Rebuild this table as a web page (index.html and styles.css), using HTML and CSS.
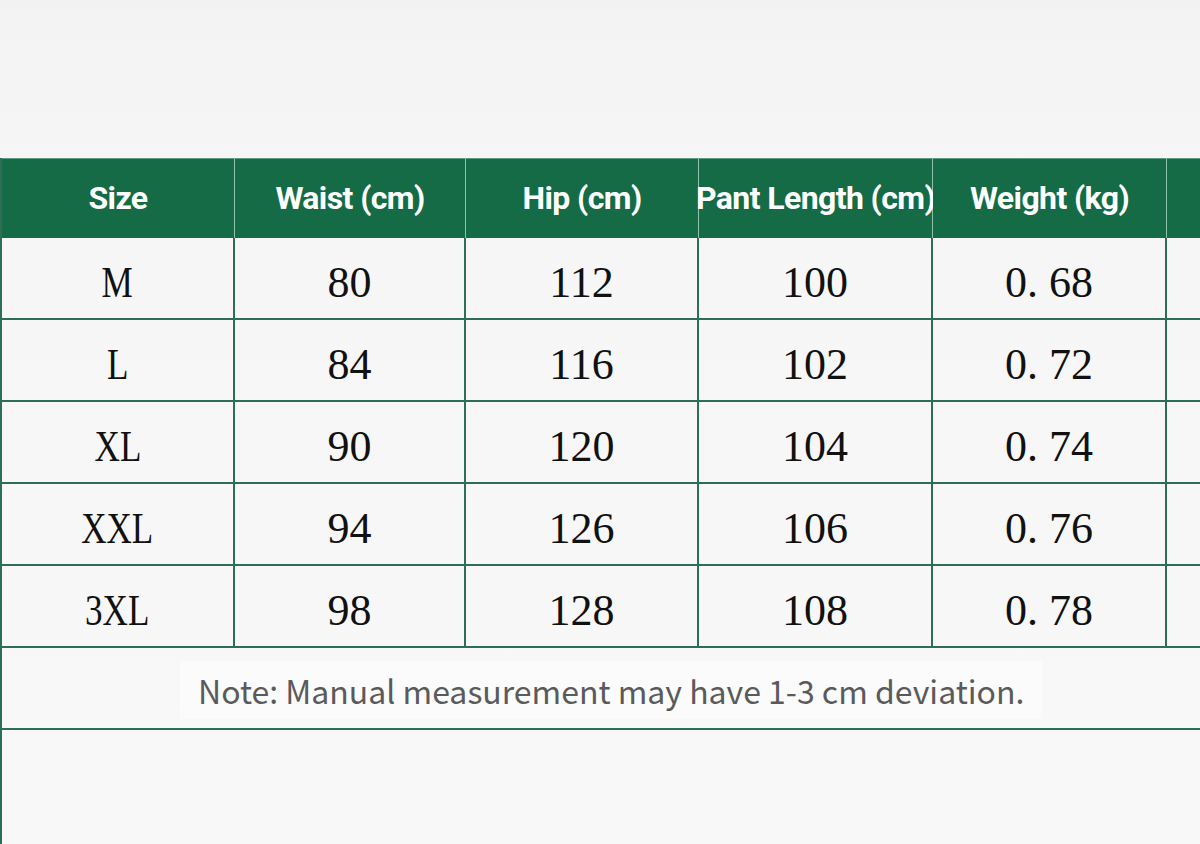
FILE: index.html
```html
<!DOCTYPE html>
<html lang="en">
<head>
<meta charset="utf-8">
<title>Size Chart</title>
<link rel="stylesheet" href="styles.css">
</head>
<body>
<div class="page">
  <div class="top"></div>
  <div class="chart">
    <div class="grid">
      <div class="hd">Size</div>
      <div class="hd">Waist (cm)</div>
      <div class="hd">Hip (cm)</div>
      <div class="hd">Pant Length (cm)</div>
      <div class="hd">Weight (kg)</div>
      <div class="hd"></div>

      <div class="cell"><span class="sz">M</span></div><div class="cell">80</div><div class="cell">112</div><div class="cell">100</div><div class="cell">0. 68</div><div class="cell"></div>
      <div class="cell"><span class="sz">L</span></div><div class="cell">84</div><div class="cell">116</div><div class="cell">102</div><div class="cell">0. 72</div><div class="cell"></div>
      <div class="cell"><span class="sz">XL</span></div><div class="cell">90</div><div class="cell">120</div><div class="cell">104</div><div class="cell">0. 74</div><div class="cell"></div>
      <div class="cell"><span class="sz">XXL</span></div><div class="cell">94</div><div class="cell">126</div><div class="cell">106</div><div class="cell">0. 76</div><div class="cell"></div>
      <div class="cell"><span class="sz">3XL</span></div><div class="cell">98</div><div class="cell">128</div><div class="cell">108</div><div class="cell">0. 78</div><div class="cell"></div>
    </div>
    <div class="note"><span class="note-text">Note: Manual measurement may have 1-3 cm deviation.</span></div>
    <div class="rest"></div>
  </div>
</div>
</body>
</html>
```

FILE: styles.css
```css
html, body {
  margin: 0;
  padding: 0;
  background: #f7f7f7;
  overflow: hidden;
}
.page {
  width: 1200px;
  height: 844px;
  overflow: hidden;
  display: flex;
  flex-direction: column;
  background: linear-gradient(#f2f2f2, #f6f6f6 158px, #f8f8f8 100%);
}
.top {
  height: 158px;
  flex: none;
}
.chart {
  width: 1420px;
  flex: 1;
  display: flex;
  flex-direction: column;
  border-left: 2px solid #2f6e56;
}
.grid {
  display: grid;
  grid-template-columns: 233px 231px 233px 234px 234px 234px;
  grid-template-rows: 80px repeat(5, 82px);
}
.hd {
  background: #156b46;
  color: #ffffff;
  font-family: Roboto, "Liberation Sans", sans-serif;
  font-weight: 700;
  font-size: 32px;
  letter-spacing: -0.6px;
  display: flex;
  align-items: center;
  justify-content: center;
  border-right: 1px solid #8fc2aa;
  border-top: 1px solid #5e9a80;
  padding-bottom: 2px;
  box-sizing: border-box;
  white-space: nowrap;
}
.cell {
  font-family: "Liberation Serif", serif;
  font-size: 44px;
  color: #111111;
  display: flex;
  align-items: center;
  justify-content: center;
  padding-top: 8px;
  box-sizing: border-box;
  border-right: 2px solid #2f6e56;
  border-bottom: 2px solid #2f6e56;
  white-space: pre;
}
.sz {
  display: inline-block;
  font-size: 45px;
  transform: scaleX(0.78);
}
.note {
  height: 82px;
  flex: none;
  box-sizing: border-box;
  border-bottom: 2px solid #2f6e56;
  display: flex;
  align-items: center;
  padding-left: 178px;
  padding-top: 4px;
}
.note-text {
  font-family: "Noto Sans CJK SC", "Noto Sans", sans-serif;
  font-size: 32px;
  color: #5a5a5a;
  background: #fbfbfb;
  padding: 6px 18px;
  white-space: nowrap;
}
.rest {
  flex: 1;
}
```
